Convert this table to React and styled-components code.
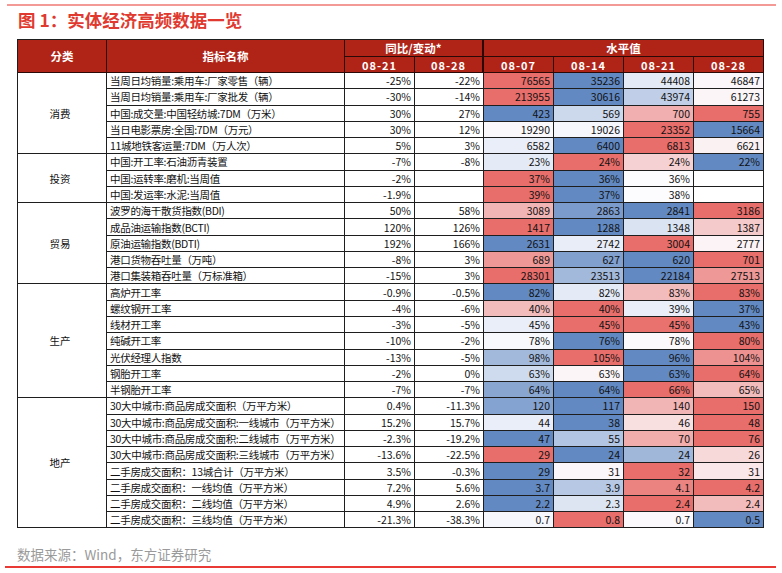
import React from "react";
import styled, { createGlobalStyle } from "styled-components";

const RED = [232, 110, 107];
const BLUE = [98, 137, 194];
const WHITE = [252, 252, 255];

// t > 0 tints towards red, t < 0 towards blue, null = blank cell
const heat = (t) => {
  if (t === null || t === undefined) return "#ffffff";
  const end = t > 0 ? RED : BLUE;
  const a = Math.min(Math.abs(t), 1);
  const c = WHITE.map((w, i) => Math.round(w + (end[i] - w) * a));
  return `rgb(${c.join(",")})`;
};

const groups = [
  {
    name: "消费",
    rows: [
      ["当周日均销量:乘用车:厂家零售（辆）", "-25%", "-22%", ["76565", "35236", "44408", "46847"], [1, -1, -0.15, 0.04]],
      ["当周日均销量:乘用车:厂家批发（辆）", "-30%", "-14%", ["213955", "30616", "43974", "61273"], [1, -1, -0.39, 0.05]],
      ["中国:成交量:中国轻纺城:7DM（万米）", "30%", "27%", ["423", "569", "700", "755"], [-1, -0.31, 0.54, 1]],
      ["当日电影票房:全国:7DM（万元）", "30%", "12%", ["19290", "19026", "23352", "15664"], [0.03, -0.04, 1, -1]],
      ["11城地铁客运量:7DM（万人次）", "5%", "3%", ["6582", "6400", "6813", "6621"], [-0.12, -1, 1, 0.08]],
    ],
  },
  {
    name: "投资",
    rows: [
      ["中国:开工率:石油沥青装置", "-7%", "-8%", ["23%", "24%", "24%", "22%"], [-0.15, 1, 0.3, -1]],
      ["中国:运转率:磨机:当周值", "-2%", "", ["37%", "36%", "36%", ""], [1, -1, 0, null]],
      ["中国:发运率:水泥:当周值", "-1.9%", "", ["39%", "37%", "38%", ""], [1, -1, 0, null]],
    ],
  },
  {
    name: "贸易",
    rows: [
      ["波罗的海干散货指数(BDI)", "50%", "58%", ["3089", "2863", "2841", "3186"], [0.5, -0.84, -1, 1]],
      ["成品油运输指数(BCTI)", "120%", "126%", ["1417", "1288", "1348", "1387"], [1, -1, -0.22, 0.35]],
      ["原油运输指数(BDTI)", "192%", "166%", ["2631", "2742", "3004", "2777"], [-1, -0.13, 1, 0.06]],
      ["港口货物吞吐量（万吨）", "-8%", "3%", ["689", "627", "620", "701"], [0.7, -0.8, -1, 1]],
      ["港口集装箱吞吐量（万标准箱）", "-15%", "3%", ["28301", "23513", "22184", "27513"], [1, -0.58, -1, 0.7]],
    ],
  },
  {
    name: "生产",
    rows: [
      ["高炉开工率", "-0.9%", "-0.5%", ["82%", "82%", "83%", "83%"], [-1, -0.15, 0.45, 1]],
      ["螺纹钢开工率", "-4%", "-6%", ["40%", "40%", "39%", "37%"], [0.45, 1, -0.12, -1]],
      ["线材开工率", "-3%", "-5%", ["45%", "45%", "45%", "43%"], [-0.12, 1, 0.97, -1]],
      ["纯碱开工率", "-10%", "-2%", ["78%", "76%", "78%", "80%"], [-0.03, -1, 0.02, 1]],
      ["光伏经理人指数", "-13%", "-5%", ["98%", "105%", "96%", "104%"], [-0.58, 1, -1, 0.75]],
      ["钢胎开工率", "-2%", "0%", ["63%", "63%", "63%", "64%"], [-0.3, 0.05, -1, 1]],
      ["半钢胎开工率", "-7%", "-7%", ["64%", "64%", "66%", "65%"], [-0.75, -1, 1, 0.45]],
    ],
  },
  {
    name: "地产",
    rows: [
      ["30大中城市:商品房成交面积（万平方米）", "0.4%", "-11.3%", ["120", "117", "140", "150"], [-0.77, -1, 0.5, 1]],
      ["30大中城市:商品房成交面积:一线城市（万平方米）", "15.2%", "15.7%", ["44", "38", "46", "48"], [-0.12, -1, 0.2, 1]],
      ["30大中城市:商品房成交面积:二线城市（万平方米）", "-2.3%", "-19.2%", ["47", "55", "70", "76"], [-1, -0.48, 0.56, 1]],
      ["30大中城市:商品房成交面积:三线城市（万平方米）", "-13.6%", "-22.5%", ["29", "24", "24", "26"], [1, -1, -0.6, 0.25]],
      ["二手房成交面积：13城合计（万平方米）", "3.5%", "-0.3%", ["29", "31", "32", "31"], [-1, 0.04, 1, 0.15]],
      ["二手房成交面积：一线均值（万平方米）", "7.2%", "5.6%", ["3.7", "3.9", "4.1", "4.2"], [-1, -0.45, 0.85, 1]],
      ["二手房成交面积：二线均值（万平方米）", "4.9%", "2.6%", ["2.2", "2.3", "2.4", "2.4"], [-1, -0.2, 1, 0.45]],
      ["二手房成交面积：三线均值（万平方米）", "-21.3%", "-38.3%", ["0.7", "0.8", "0.7", "0.5"], [-0.04, 1, 0.02, -1]],
    ],
  },
];

const GlobalStyle = createGlobalStyle`
  body {
    margin: 0;
    background: #fff;
    font-family: "Noto Sans CJK SC", "Noto Sans", sans-serif;
  }
`;

const Page = styled.div`
  width: 782px;
  padding-top: 4px;
`;

const TopRule = styled.div`
  margin-left: 7px;
  width: 769px;
  height: 2px;
  background: #f39996;
`;

const Title = styled.h1`
  margin: 3px 0 0 18px;
  font-size: 17.5px;
  line-height: 22px;
  font-weight: 700;
  color: #e03a30;
`;

const Grid = styled.div`
  display: grid;
  grid-template-columns: 89px 238px 70px 69px 70px 70px 70px 70px;
  grid-template-rows: 17px 16px;
  grid-auto-rows: 16.28px;
  width: max-content;
  margin: 8px 0 0 17px;
  border-left: 1px solid #1e1e1e;
  border-top: 1px solid #1e1e1e;
`;

const Head = styled.div`
  display: flex;
  align-items: center;
  justify-content: center;
  box-sizing: border-box;
  background: #b02418;
  color: #fff;
  font-weight: 700;
  font-size: ${(p) => (p.$date ? "11px" : "11.5px")};
  letter-spacing: ${(p) => (p.$date ? "1px" : "0")};
  border-right: ${(p) => (p.$split ? "2px" : "1px")} solid #2a0906;
  border-bottom: 1px solid #2a0906;
  grid-column: ${(p) => p.$col || "auto"};
  grid-row: ${(p) => p.$row || "auto"};
`;

const Cell = styled.div`
  display: flex;
  align-items: center;
  box-sizing: border-box;
  min-width: 0;
  overflow: hidden;
  white-space: nowrap;
  font-size: 10.5px;
  color: #111;
  background: ${(p) => p.$bg || "#fff"};
  border-right: 1px solid #1e1e1e;
  border-bottom: 1px solid #1e1e1e;
`;

const CatCell = styled(Cell)`
  grid-column: 1;
  grid-row: span ${(p) => p.$span};
  justify-content: center;
  padding-right: 4px;
`;

const NameCell = styled(Cell)`
  grid-column: 2;
  padding-left: 3px;
  letter-spacing: -0.3px;
`;

const NumCell = styled(Cell)`
  justify-content: flex-end;
  padding-right: 3px;
`;

const Source = styled.div`
  margin: 17px 0 0 17px;
  font-size: 13.5px;
  line-height: 18px;
  color: #9a9a9a;
`;

const BottomRule = styled.div`
  margin: 3px 0 0 5px;
  width: 771px;
  height: 2px;
  background: #ea3a35;
`;

function App() {
  return (
    <Page>
      <GlobalStyle />
      <TopRule />
      <Title>图 1：实体经济高频数据一览</Title>
      <Grid>
        <Head $col="1" $row="1 / span 2">分类</Head>
        <Head $col="2" $row="1 / span 2">指标名称</Head>
        <Head $col="3 / span 2" $row="1" $split>同比/变动*</Head>
        <Head $col="5 / span 4" $row="1">水平值</Head>
        <Head $col="3" $row="2" $date>08-21</Head>
        <Head $col="4" $row="2" $date $split>08-28</Head>
        <Head $col="5" $row="2" $date>08-07</Head>
        <Head $col="6" $row="2" $date>08-14</Head>
        <Head $col="7" $row="2" $date>08-21</Head>
        <Head $col="8" $row="2" $date>08-28</Head>
        {groups.map((g) =>
          g.rows.map(([name, c1, c2, vals, tints], i) => (
            <React.Fragment key={g.name + i}>
              {i === 0 && <CatCell $span={g.rows.length}>{g.name}</CatCell>}
              <NameCell>{name}</NameCell>
              <NumCell>{c1}</NumCell>
              <NumCell>{c2}</NumCell>
              {vals.map((v, j) => (
                <NumCell key={j} $bg={heat(tints[j])}>
                  {v}
                </NumCell>
              ))}
            </React.Fragment>
          ))
        )}
      </Grid>
      <Source>数据来源：Wind，东方证券研究</Source>
      <BottomRule />
    </Page>
  );
}

export default App;
